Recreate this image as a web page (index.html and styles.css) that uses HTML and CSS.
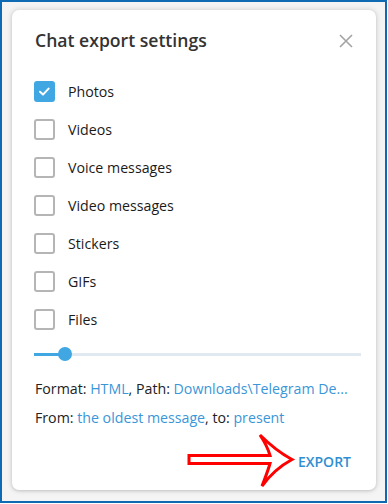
FILE: index.html
```html
<!DOCTYPE html>
<html>
<head>
<meta charset="utf-8">
<link rel="stylesheet" href="styles.css">
</head>
<body>
<div class="frame">
  <div class="card">
    <div class="header">
      <div class="title">Chat export settings</div>
      <svg class="close" width="14" height="14" viewBox="0 0 14 14"><path d="M1 1L13 13M13 1L1 13" stroke="#a3a3a3" stroke-width="1.6" fill="none"/></svg>
    </div>
    <div class="list">
      <div class="row"><span class="cb checked"><svg width="21" height="21" viewBox="0 0 21 21"><path d="M6 10.8l3 2.8 5.6-6" stroke="#fff" stroke-width="2" fill="none" stroke-linecap="round" stroke-linejoin="round"/></svg></span><span class="label">Photos</span></div>
      <div class="row"><span class="cb"></span><span class="label">Videos</span></div>
      <div class="row"><span class="cb"></span><span class="label">Voice messages</span></div>
      <div class="row"><span class="cb"></span><span class="label">Video messages</span></div>
      <div class="row"><span class="cb"></span><span class="label">Stickers</span></div>
      <div class="row"><span class="cb"></span><span class="label">GIFs</span></div>
      <div class="row"><span class="cb"></span><span class="label">Files</span></div>
    </div>
    <div class="slider">
      <div class="track"><div class="fill"></div><div class="thumb"></div></div>
    </div>
    <div class="info">Format: <span class="link">HTML</span>, Path: <span class="link">Downloads\Telegram De...</span></div>
    <div class="info second">From: <span class="link">the oldest message</span>, to: <span class="link">present</span></div>
    <div class="footer"><span class="export">EXPORT</span></div>
    <svg class="arrow" width="110" height="60" viewBox="0 0 110 60">
      <path d="M3 22.5 H84 C82 15 78 8 74 2 C84 12 94 20 106 26.5 C94 33 84 42 76 53 C79 45 82 38 84 30.5 H3 Z" fill="#fff" stroke="#f00" stroke-width="3" stroke-linejoin="miter"/>
    </svg>
  </div>
</div>
</body>
</html>
```
FILE: styles.css
```css
html, body { margin: 0; padding: 0; background: #fff; }
body { font-family: "Open Sans", "Noto Sans", sans-serif; }
.frame {
  box-sizing: border-box;
  width: 387px;
  height: 503px;
  border: 2px solid #0f6ab4;
  background: #f4f4f4;
  padding: 8px 0 0 10px;
}
.card {
  position: relative;
  box-sizing: border-box;
  width: 364px;
  height: 480px;
  background: #fff;
  border-radius: 7px;
  box-shadow: 0 0 4px 2px rgba(0,0,0,0.08), 0 1px 3px rgba(0,0,0,0.12);
  padding: 18px 0 0 22px;
}
.header {
  display: flex;
  align-items: center;
  justify-content: space-between;
  height: 24px;
  padding-right: 23px;
}
.title {
  font-size: 17.6px;
  font-weight: 600;
  color: #333;
  line-height: 24px;
  padding-left: 1px;
}
.close { display: block; margin-top: 2px; }
.list { margin-top: 20px; }
.row {
  display: flex;
  align-items: center;
  height: 38px;
}
.cb {
  box-sizing: border-box;
  width: 21px;
  height: 21px;
  border: 2px solid #b5b5b5;
  border-radius: 3px;
  display: block;
  position: relative;
}
.cb.checked {
  background: #40a7e3;
  border-color: #40a7e3;
}
.cb svg { position: absolute; left: -2px; top: -2px; }
.label {
  margin-left: 13px;
  font-size: 14.2px;
  color: #1a1a1a;
}
.slider {
  margin-top: 9px;
  height: 14px;
  display: flex;
  align-items: center;
  padding-right: 15px;
}
.track {
  position: relative;
  flex: 1;
  height: 3px;
  background: #e1e9f0;
}
.fill {
  width: 31px;
  height: 3px;
  background: #40a7e3;
}
.thumb {
  position: absolute;
  left: 24px;
  top: -5.5px;
  width: 14px;
  height: 14px;
  border-radius: 50%;
  background: #40a7e3;
}
.info {
  margin-top: 18px;
  line-height: 20px;
  font-size: 14.2px;
  color: #222;
  padding-left: 1px;
}
.info.second { margin-top: 9px; }
.link { color: #3a96d8; }
.footer {
  margin-top: 18px;
  height: 30px;
  display: flex;
  align-items: center;
  justify-content: flex-end;
  padding-right: 25px;
}
.export {
  font-size: 14px;
  font-weight: 600;
  color: #2f8fd2;
}
.arrow {
  position: absolute;
  left: 174px;
  top: 423px;
}
```
